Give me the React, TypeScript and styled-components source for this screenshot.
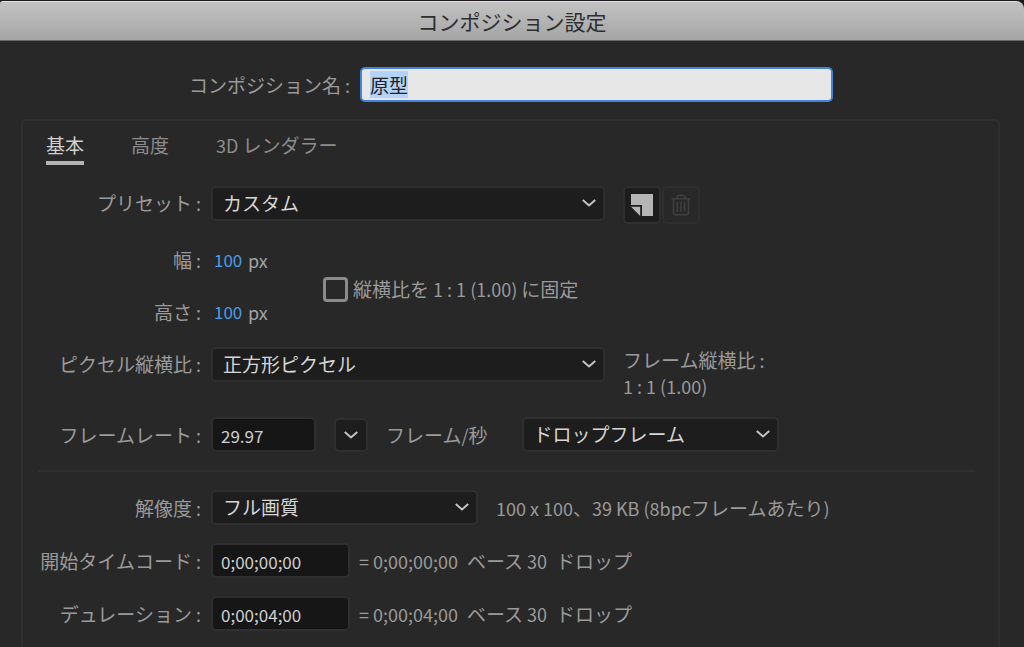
import React, { useEffect, useRef } from "react";
import styled, { createGlobalStyle } from "styled-components";

const GlobalStyle = createGlobalStyle`
  * { box-sizing: border-box; }
  body {
    margin: 0;
    background: #1c1a1e;
    overflow: hidden;
  }
  body, input, select, button {
    font-family: "Noto Sans CJK JP", sans-serif;
    font-size: 19px;
    line-height: 24px;
  }
`;

const Dialog = styled.main`
  display: flex;
  flex-direction: column;
  height: 100vh;
  padding-top: 1px;
  color: #9a9a9a;
`;

const TitleBar = styled.header`
  flex: none;
  height: 40px;
  border-top: 1px solid #e0e0e0;
  border-bottom: 1px solid #6a6a6a;
  border-radius: 3px 8px 0 0;
  background: linear-gradient(#c2c2c2, #a5a5a5);
  text-align: center;
`;

const Title = styled.h1`
  margin: 0;
  font-size: 21px;
  font-weight: 400;
  line-height: 38px;
  color: #2e2e2e;
`;

const Body = styled.form`
  flex: 1;
  display: flex;
  flex-direction: column;
  min-height: 0;
  padding: 26px 24px 0 21px;
  background: #282828;
`;

const NameRow = styled.div`
  display: grid;
  grid-template-columns: 329px minmax(0, 473px);
  column-gap: 10px;
  align-items: center;
`;

const FieldLabel = styled.label`
  text-align: right;
  white-space: nowrap;
`;

const Latin = styled.span`
  font-size: 18px;
`;

const NameInput = styled.input`
  width: 100%;
  height: 35px;
  padding: 0 8px;
  border: 2px solid #4284dc;
  border-radius: 5px;
  outline: none;
  background: #e7e7e7;
  color: #222;
  &::selection { background: #b3d3fb; color: #222; }
`;

const Panel = styled.section`
  flex: 1;
  margin-top: 17px;
  padding: 10px 23px 0 15px;
  border: 2px solid #2f2f2f;
  border-bottom: 0;
  border-radius: 5px 5px 0 0;
`;

const Tabs = styled.div`
  display: flex;
  gap: 47px;
  padding-left: 8px;
  margin-bottom: 21px;
`;

const Tab = styled.button<{ $active?: boolean }>`
  height: 34px;
  padding: 0 0 2px;
  border: 0;
  border-bottom: 4px solid ${(p) => (p.$active ? "#b4b4b4" : "transparent")};
  background: none;
  line-height: 28px;
  color: ${(p) => (p.$active ? "#cfcfcf" : "#8d8d8d")};
`;

const Row = styled.div<{ $after?: number; $top?: boolean }>`
  display: grid;
  grid-template-columns: 163px minmax(0, 1fr);
  column-gap: 10px;
  align-items: ${(p) => (p.$top ? "start" : "center")};
  margin-bottom: ${(p) => p.$after ?? 0}px;
  ${(p) => p.$top && `> label { line-height: 34px; }`}
`;

const Cell = styled.div<{ $gap: number; $top?: boolean }>`
  display: flex;
  align-items: ${(p) => (p.$top ? "flex-start" : "center")};
  gap: ${(p) => p.$gap}px;
  white-space: nowrap;
`;

const SelectFrame = styled.div<{ $width: number }>`
  position: relative;
  width: ${(p) => p.$width}px;
`;

const SelectBox = styled.select`
  display: block;
  width: 100%;
  height: 35px;
  padding: 0 32px 2px 10px;
  appearance: none;
  border: 2px solid #2f2f2f;
  border-radius: 5px;
  background: #1d1d1d;
  color: #d6d6d6;
`;

const ChevronSvg = styled.svg`
  display: block;
  width: 16px;
  height: 10px;
  fill: none;
  stroke: #c4c4c4;
  stroke-width: 2;
`;

const SelectArrow = styled.span`
  position: absolute;
  right: 8px;
  top: 12px;
  pointer-events: none;
`;

const TextInput = styled.input<{ $width: number }>`
  width: ${(p) => p.$width}px;
  height: 35px;
  padding: 2px 8px 0;
  border: 2px solid #2f2f2f;
  border-radius: 5px;
  background: #161616;
  color: #cecece;
  font-size: 17px;
`;

const IconButton = styled.button<{ $size: number }>`
  display: grid;
  place-items: center;
  width: ${(p) => p.$size}px;
  height: ${(p) => p.$size}px;
  padding: 0;
  border: 2px solid #2f2f2f;
  border-radius: 5px;
  background: #1d1d1d;
  &:disabled { background: transparent; }
`;

const IconGroup = styled.div`
  display: flex;
  gap: 1px;
`;

const RateControls = styled.div`
  display: flex;
  align-items: center;
  gap: 18px;
`;

const SizeGroup = styled.div`
  display: flex;
  gap: 56px;
  margin: 24px 0 23px;
`;

const SizeFields = styled.div`
  display: grid;
  row-gap: 28px;
`;

const SizeRow = styled.div`
  display: grid;
  grid-template-columns: 163px 56px;
  column-gap: 10px;
`;

const Measure = styled.div`
  display: flex;
  gap: 4px;
  padding-left: 3px;
  color: #a2a2a2;
`;

const HotValue = styled.input`
  width: 30px;
  height: 24px;
  padding: 0;
  border: 0;
  background: none;
  color: #4a9de8;
  font-size: 17px;
`;

const LockLabel = styled.label`
  display: flex;
  align-items: center;
  gap: 5px;
  padding-top: 6px;
`;

const CheckBox = styled.input`
  width: 25px;
  height: 25px;
  margin: 0;
  appearance: none;
  border: 3px solid #8b8b8b;
  border-radius: 4px;
`;

const AspectInfo = styled.div`
  line-height: 26px;
`;

const Divider = styled.hr`
  height: 2px;
  margin: 18px 0;
  border: 0;
  background: #2f2f2f;
`;

const Chevron = () => (
  <ChevronSvg viewBox="0 0 16 10" aria-hidden="true">
    <path d="M1.8 2 8 7.4 14.2 2" />
  </ChevronSvg>
);

const PresetIcon = () => (
  <svg width="22" height="22" viewBox="0 0 22 22" aria-hidden="true">
    <path d="M0 0H22V22H11V11H0Z" fill="#b5b5b5" />
    <path d="M0 12.7H9.2V22Z" fill="#b5b5b5" />
  </svg>
);

const TrashIcon = () => (
  <svg width="20" height="22" viewBox="0 0 20 22" fill="none" stroke="#3f3f3f" strokeWidth="1.6" aria-hidden="true">
    <path d="M.5 4.8h19M6 4.8V3.2C6 2 6.8 1.4 7.8 1.4h4.4c1 0 1.8.6 1.8 1.8v1.6M2.5 4.8v14.4c0 1 .6 1.6 1.6 1.6h11.8c1 0 1.6-.6 1.6-1.6V4.8M6.4 7.8v10M10 7.8v10M13.6 7.8v10" />
  </svg>
);

const Label = ({ id, children }: { id: string; children: React.ReactNode }) => (
  <FieldLabel htmlFor={id}>
    {children}
    <Latin> :</Latin>
  </FieldLabel>
);

const Select = ({ id, width, value, label }: { id: string; width: number; value: string; label?: string }) => (
  <SelectFrame $width={width}>
    <SelectBox id={id} aria-label={label}>
      <option>{value}</option>
    </SelectBox>
    <SelectArrow>
      <Chevron />
    </SelectArrow>
  </SelectFrame>
);

const SizeField = ({ id, name }: { id: string; name: string }) => (
  <SizeRow>
    <Label id={id}>{name}</Label>
    <Measure>
      <HotValue id={id} defaultValue="100" />
      <Latin>px</Latin>
    </Measure>
  </SizeRow>
);

const TimeRow = ({ id, name, value, after }: { id: string; name: string; value: string; after?: number }) => (
  <Row $after={after}>
    <Label id={id}>{name}</Label>
    <Cell $gap={9}>
      <TextInput id={id} $width={139} defaultValue={value} />
      <Cell $gap={9}>
        <Latin>= {value}</Latin>
        <span>
          ベース<Latin> 30</Latin>
        </span>
        <span>ドロップ</span>
      </Cell>
    </Cell>
  </Row>
);

export default function App() {
  const nameRef = useRef<HTMLInputElement>(null);

  useEffect(() => {
    nameRef.current?.focus();
    nameRef.current?.select();
  }, []);

  return (
    <>
      <GlobalStyle />
      <Dialog>
        <TitleBar>
          <Title>コンポジション設定</Title>
        </TitleBar>
        <Body>
          <NameRow>
            <Label id="name">コンポジション名</Label>
            <NameInput id="name" ref={nameRef} defaultValue="原型" />
          </NameRow>
          <Panel>
            <Tabs role="tablist">
              <Tab type="button" role="tab" aria-selected="true" $active>基本</Tab>
              <Tab type="button" role="tab">高度</Tab>
              <Tab type="button" role="tab">
                <Latin>3D </Latin>レンダラー
              </Tab>
            </Tabs>

            <Row $top>
              <Label id="preset">プリセット</Label>
              <Cell $gap={18} $top>
                <Select id="preset" width={394} value="カスタム" />
                <IconGroup>
                  <IconButton type="button" $size={38} aria-label="プリセットを保存">
                    <PresetIcon />
                  </IconButton>
                  <IconButton type="button" $size={38} aria-label="プリセットを削除" disabled>
                    <TrashIcon />
                  </IconButton>
                </IconGroup>
              </Cell>
            </Row>

            <SizeGroup>
              <SizeFields>
                <SizeField id="width" name="幅" />
                <SizeField id="height" name="高さ" />
              </SizeFields>
              <LockLabel>
                <CheckBox type="checkbox" />
                <span>
                  縦横比を<Latin> 1 : 1 (1.00) </Latin>に固定
                </span>
              </LockLabel>
            </SizeGroup>

            <Row $top $after={18}>
              <Label id="pixel">ピクセル縦横比</Label>
              <Cell $gap={18} $top>
                <Select id="pixel" width={394} value="正方形ピクセル" />
                <AspectInfo>
                  <div>
                    フレーム縦横比<Latin> :</Latin>
                  </div>
                  <Latin as="div">1 : 1 (1.00)</Latin>
                </AspectInfo>
              </Cell>
            </Row>

            <Row>
              <Label id="rate">フレームレート</Label>
              <Cell $gap={34}>
                <RateControls>
                  <TextInput id="rate" $width={105} defaultValue="29.97" />
                  <IconButton type="button" $size={34} aria-label="フレームレートの候補">
                    <Chevron />
                  </IconButton>
                  <span>
                    フレーム<Latin>/</Latin>秒
                  </span>
                </RateControls>
                <Select id="drop" width={257} value="ドロップフレーム" label="ドロップフレーム" />
              </Cell>
            </Row>

            <Divider />

            <Row $after={18}>
              <Label id="resolution">解像度</Label>
              <Cell $gap={18}>
                <Select id="resolution" width={267} value="フル画質" />
                <span>
                  <Latin>100 x 100</Latin>、<Latin>39 KB (8bpc</Latin>フレームあたり<Latin>)</Latin>
                </span>
              </Cell>
            </Row>
            <TimeRow id="start" name="開始タイムコード" value="0;00;00;00" after={18} />
            <TimeRow id="duration" name="デュレーション" value="0;00;04;00" />
          </Panel>
        </Body>
      </Dialog>
    </>
  );
}
